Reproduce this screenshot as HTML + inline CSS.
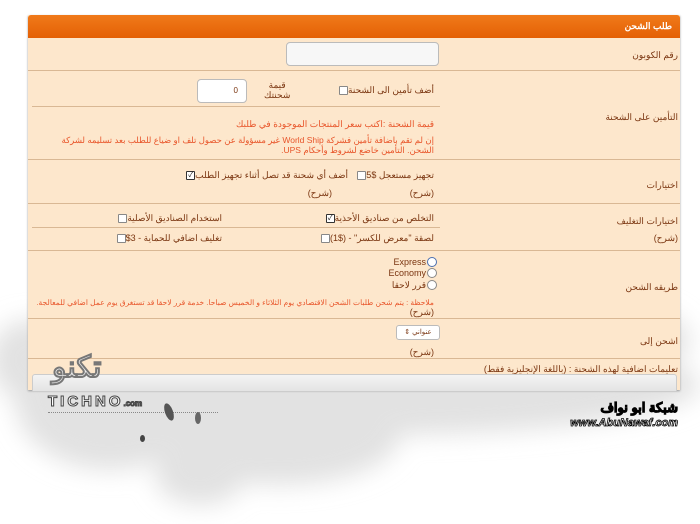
<!DOCTYPE html>
<html><head><meta charset="utf-8">
<style>
body{margin:0;width:700px;height:524px;background:#fff;position:relative;overflow:hidden;font-family:"Liberation Sans","Noto Sans CJK SC",sans-serif;font-size:9px;color:#7a3510}
.a{position:absolute}
.panel{left:28px;top:15px;width:652px;height:375px;background:#fde7cc;box-shadow:0 1px 2px #999}
.hd{left:28px;top:15px;width:652px;height:23px;background:linear-gradient(#f07a1a,#e46005);border-radius:3px 3px 0 0}
.hr{height:1px;background:#d9b894}
.lbl{right:22px;direction:rtl;font-size:9px}
.r{direction:rtl;white-space:nowrap}
.red{color:#e8552a}
.cb{display:inline-block;width:7px;height:7px;border:1px solid #888;background:#fff;border-radius:1px;vertical-align:middle;font-size:7px;line-height:7px;text-align:center;color:#000}
.rd{display:inline-block;width:8px;height:8px;border:1px solid #888;background:#fff;border-radius:50%;vertical-align:middle}
.box{background:#fff;border:1px solid #bbb;border-radius:4px}
</style></head><body>
<svg class="a" style="left:0;top:270px" width="700" height="254">
<defs><filter id="b"><feGaussianBlur stdDeviation="12"/></filter></defs>
<g fill="#e2e2e2" filter="url(#b)">
<ellipse cx="380" cy="115" rx="320" ry="50"/>
<ellipse cx="110" cy="130" rx="95" ry="70"/>
<ellipse cx="280" cy="165" rx="120" ry="50"/>
<ellipse cx="560" cy="70" rx="130" ry="45"/>
<ellipse cx="30" cy="90" rx="40" ry="40"/>
<ellipse cx="200" cy="205" rx="45" ry="30"/>
</g></svg>
<div class="a panel"></div>
<div class="a hd"></div>
<div class="a r" style="right:28px;top:21px;color:#fff;font-weight:bold;font-size:9px">طلب الشحن</div>
<div class="a lbl" style="top:50px">رقم الكوبون</div>
<div class="a box" style="left:286px;top:42px;width:151px;height:22px;background:#f7f7f7"></div>
<div class="a hr" style="left:28px;top:70px;width:652px"></div>
<div class="a lbl" style="top:112px">التأمين على الشحنة</div>
<div class="a r" style="right:266px;top:85px">أضف تأمين الى الشحنة<span class="cb"></span></div>
<div class="a" style="left:264px;top:80px;text-align:center;line-height:10px">قيمة<br>شحنتك</div>
<div class="a box" style="left:197px;top:79px;width:48px;height:22px;font-size:8px;text-align:right;line-height:22px"><span style="margin-right:8px">0</span></div>
<div class="a hr" style="left:32px;top:106px;width:408px"></div>
<div class="a r red" style="right:266px;top:119px">قيمة الشحنة :اكتب سعر المنتجات الموجودة في طلبك</div>
<div class="a red" style="direction:rtl;right:266px;top:135px;width:400px;line-height:10px;font-size:8.5px">إن لم تقم باضافة تأمين فشركة World Ship غير مسؤولة عن حصول تلف او ضياع للطلب بعد تسليمه لشركة الشحن. التأمين خاضع لشروط وأحكام UPS.</div>
<div class="a hr" style="left:28px;top:159px;width:652px"></div>
<div class="a lbl" style="top:180px">اختيارات</div>
<div class="a r" style="right:266px;top:170px">تجهيز مستعجل $5<span class="cb"></span></div>
<div class="a r" style="right:352px;top:170px">أضف أي شحنة قد تصل أثناء تجهيز الطلب<span class="cb" style="border-color:#333">&#10003;</span></div>
<div class="a r" style="right:266px;top:188px">(شرح)</div>
<div class="a r" style="right:368px;top:188px">(شرح)</div>
<div class="a hr" style="left:28px;top:203px;width:652px"></div>
<div class="a lbl" style="top:216px">اختيارات التغليف</div>
<div class="a lbl" style="top:233px">(شرح)</div>
<div class="a r" style="right:266px;top:213px">التخلص من صناديق الأحذية<span class="cb" style="border-color:#333">&#10003;</span></div>
<div class="a r" style="right:478px;top:213px">استخدام الصناديق الأصلية<span class="cb"></span></div>
<div class="a hr" style="left:32px;top:227px;width:408px"></div>
<div class="a r" style="right:266px;top:233px">لصقة "معرض للكسر" - ($1)<span class="cb"></span></div>
<div class="a r" style="right:478px;top:233px">تغليف اضافي للحماية - 3$<span class="cb"></span></div>
<div class="a hr" style="left:28px;top:250px;width:652px"></div>
<div class="a lbl" style="top:282px">طريقه الشحن</div>
<div class="a r" style="right:274px;top:257px">Express</div><span class="a rd" style="left:427px;top:257px;border-color:#4a6fb0"></span>
<div class="a r" style="right:274px;top:268px">Economy</div><span class="a rd" style="left:427px;top:268px"></span>
<div class="a r" style="right:274px;top:280px">قرر لاحقا</div><span class="a rd" style="left:427px;top:280px"></span>
<div class="a r red" style="right:266px;top:298px;font-size:7.6px">ملاحظة : يتم شحن طلبات الشحن الاقتصادي يوم الثلاثاء و الخميس صباحا. خدمة قرر لاحقا قد تستغرق يوم عمل اضافي للمعالجة.</div>
<div class="a r" style="right:266px;top:307px">(شرح)</div>
<div class="a hr" style="left:28px;top:318px;width:652px"></div>
<div class="a lbl" style="top:336px">اشحن إلى</div>
<div class="a box" style="left:396px;top:325px;width:42px;height:13px;font-size:7px;line-height:13px;text-align:center;border-radius:3px">⇕ عنواني</div>
<div class="a r" style="right:266px;top:347px">(شرح)</div>
<div class="a hr" style="left:28px;top:358px;width:652px"></div>
<div class="a r" style="right:22px;top:364px">تعليمات اضافية لهذه الشحنة : (باللغة الإنجليزية فقط)</div>
<div class="a" style="left:32px;top:374px;width:643px;height:16px;background:linear-gradient(#f4f4f4,#e4e4e4);border:1px solid #ccc;border-radius:3px 3px 0 0"></div>
<div class="a" style="left:52px;top:350px;font-size:30px;color:#eee;font-weight:bold;-webkit-text-stroke:1px #777;direction:rtl">تكنو</div>
<div class="a" style="left:48px;top:393px;font-size:15px;letter-spacing:3px;color:#fff;-webkit-text-stroke:1px #444;font-weight:bold">TICHNO<span style="font-size:8px;letter-spacing:0">.com</span></div>
<div class="a" style="left:48px;top:412px;width:170px;height:1px;border-top:1px dotted #888"></div>
<div class="a" style="left:165px;top:403px;width:8px;height:18px;background:#555;border-radius:50%;transform:rotate(-20deg)"></div>
<div class="a" style="left:195px;top:412px;width:6px;height:12px;background:#666;border-radius:50%"></div>
<div class="a" style="left:140px;top:435px;width:5px;height:7px;background:#444;border-radius:50%"></div>
<div class="a r" style="right:22px;top:400px;font-size:13px;font-weight:bold;color:#fff;-webkit-text-stroke:1px #000">شبكة ابو نواف</div>
<div class="a" style="right:22px;top:417px;font-size:11px;font-weight:bold;font-style:italic;color:#fff;-webkit-text-stroke:0.8px #000">www.AbuNawaf.com</div>
</body></html>
